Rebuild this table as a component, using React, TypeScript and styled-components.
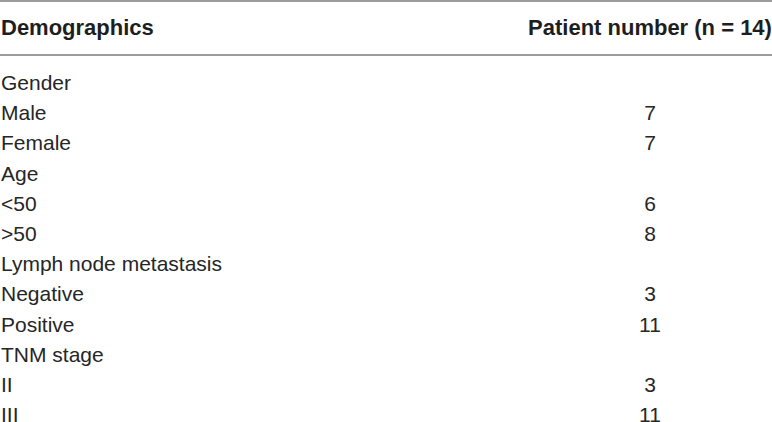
import React from "react";
import styled, { createGlobalStyle } from "styled-components";

const Global = createGlobalStyle`
  html, body { margin: 0; padding: 0; background: #ffffff; }
  body { width: 772px; height: 422px; overflow: hidden; }
`;

const Table = styled.div`
  width: 772px;
  font-family: "Liberation Sans", Arial, Helvetica, sans-serif;
  color: #262626;
  border-top: 2px solid #9c9c9c;
  box-sizing: border-box;
`;

const HeaderRow = styled.div`
  display: grid;
  grid-template-columns: 1fr 244px;
  align-items: center;
  height: 52px;
  border-bottom: 2px solid #9c9c9c;
  font-weight: 700;
  font-size: 22px;
  color: #1e1e1e;
`;

const Body = styled.div`
  padding-top: 12px;
  display: flex;
  flex-direction: column;
`;

const Row = styled.div`
  display: grid;
  grid-template-columns: 1fr 244px;
  align-items: center;
  height: 30.2px;
  font-size: 21px;
  line-height: 24px;
`;

const Label = styled.div`
  padding-left: 1px;
  white-space: nowrap;
`;

const Value = styled.div`
  text-align: center;
  white-space: nowrap;
`;

const rows: [string, string][] = [
  ["Gender", ""],
  ["Male", "7"],
  ["Female", "7"],
  ["Age", ""],
  ["<50", "6"],
  [">50", "8"],
  ["Lymph node metastasis", ""],
  ["Negative", "3"],
  ["Positive", "11"],
  ["TNM stage", ""],
  ["II", "3"],
  ["III", "11"],
];

export default function App() {
  return (
    <>
      <Global />
      <Table>
        <HeaderRow>
          <Label>Demographics</Label>
          <Value>Patient number (n = 14)</Value>
        </HeaderRow>
        <Body>
          {rows.map(([l, v], i) => (
            <Row key={i}>
              <Label>{l}</Label>
              <Value>{v}</Value>
            </Row>
          ))}
        </Body>
      </Table>
    </>
  );
}
